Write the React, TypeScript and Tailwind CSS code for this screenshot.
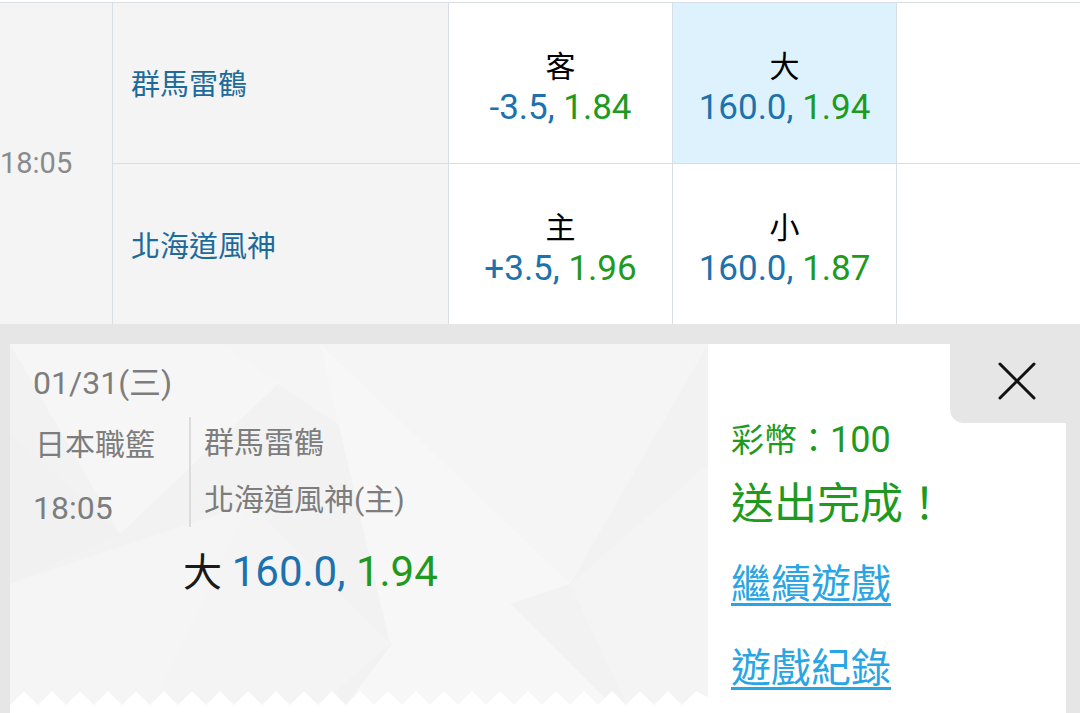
const rows = [
  { team: "群馬雷鶴", label: "客", line: "-3.5", odds: "1.84", ouLabel: "大", ouLine: "160.0", ouOdds: "1.94", picked: true },
  { team: "北海道風神", label: "主", line: "+3.5", odds: "1.96", ouLabel: "小", ouLine: "160.0", ouOdds: "1.87", picked: false },
];

function OddsCell({ label, line, odds, picked }: { label: string; line: string; odds: string; picked?: boolean }) {
  return (
    <div className={`w-[224px] border-r border-[#d7dfe5] flex flex-col items-center pt-[44px] ${picked ? "bg-[#ddf2fc]" : "bg-white"}`}>
      <div className="text-[30px] leading-[40px] text-black">{label}</div>
      <div className="text-[35px] leading-[42px]">
        <span className="text-[#1c72ad]">{line}, </span>
        <span className="text-[#1e9a1e]">{odds}</span>
      </div>
    </div>
  );
}

function PanelPattern() {
  // faint low-poly background
  return (
    <svg className="absolute inset-0 w-full h-full" viewBox="0 0 698 369" preserveAspectRatio="none">
      <rect width="698" height="369" fill="#f2f2f2" />
      <polygon points="0,0 310,0 110,190" fill="#f6f6f6" />
      <polygon points="210,0 698,0 560,240" fill="#f5f5f5" />
      <polygon points="310,0 560,240 380,300" fill="#f7f7f7" />
      <polygon points="0,240 240,160 140,369 0,369" fill="#f5f5f5" />
      <polygon points="240,160 380,300 300,369 140,369" fill="#f4f4f4" />
      <polygon points="330,369 450,210 610,369" fill="#f7f7f7" />
      <polygon points="560,240 698,120 698,369 620,369" fill="#f4f4f4" />
      <polygon points="0,90 110,190 0,240" fill="#f1f1f1" />
    </svg>
  );
}

function Zigzag() {
  const pts: string[] = ["0,22"];
  for (let x = 0; x <= 698; x += 28) {
    pts.push(`${x},14`, `${x + 14},0`);
  }
  pts.push("712,14", "712,22");
  return (
    <svg className="absolute left-0 bottom-0 w-[698px] h-[22px]" viewBox="0 0 698 22">
      <polygon points={pts.join(" ")} fill="#ffffff" />
    </svg>
  );
}

export default function App() {
  return (
    <div className="w-[1080px] h-[713px] overflow-hidden bg-white font-['Roboto','Noto_Sans_CJK_TC',sans-serif]">
      {/* game table */}
      <div className="h-[324px] pt-[2px]">
        <div className="flex h-[322px] border-t border-[#d7dfe5]">
          <div className="w-[113px] bg-[#f4f4f4] border-r border-[#d7dfe5] flex items-center">
            <span className="text-[29px] text-[#8a8a8a]">18:05</span>
          </div>
          <div className="flex-1 flex flex-col">
            {rows.map((r, i) => (
              <div key={r.team} className={`flex ${i === 0 ? "h-[161px] border-b border-[#d7dfe5]" : "h-[160px]"}`}>
                <div className={`w-[336px] bg-[#f4f4f4] border-r border-[#d7dfe5] flex items-center pl-[18px] ${i === 0 ? "pt-[6px]" : "pt-[7px]"}`}>
                  <span className="text-[29px] text-[#1d6b9b]">{r.team}</span>
                </div>
                <OddsCell label={r.label} line={r.line} odds={r.odds} />
                <OddsCell label={r.ouLabel} line={r.ouLine} odds={r.ouOdds} picked={r.picked} />
                <div className="flex-1 bg-white" />
              </div>
            ))}
          </div>
        </div>
      </div>

      {/* bet slip */}
      <div className="relative h-[389px] bg-[#e6e6e6] pt-[20px] pl-[10px] pr-[14px] flex">
        <div className="relative w-[698px] h-[369px] overflow-hidden">
          <PanelPattern />
          <Zigzag />
          <div className="relative pt-[19px] pl-[23px] text-[30px] text-[#7d7d7d]">
            <div className="leading-[40px] text-[32px]">01/31(三)</div>
            <div className="flex items-start mt-[14px]">
              <div className="w-[156px]">
                <div className="leading-[56px] pl-[2px]">日本職籃</div>
                <div className="leading-[56px] mt-[7px] text-[32px]">18:05</div>
              </div>
              <div className="w-[2px] h-[110px] bg-[#dcdcdc]" />
              <div className="pl-[13px]">
                <div className="leading-[52px]">群馬雷鶴</div>
                <div className="leading-[52px] mt-[5px]">北海道風神(主)</div>
              </div>
            </div>
            <div className="ml-[150px] mt-[12px] text-[42px] leading-[48px]">
              <span className="text-[#1a1a1a] text-[39px]">大 </span>
              <span className="text-[#1c72ad]">160.0, </span>
              <span className="text-[#1e9a1e]">1.94</span>
            </div>
          </div>
        </div>

        <div className="flex-1 h-[369px] bg-white pl-[23px] pt-[72px]">
          <div className="text-[33px] leading-[48px] text-[#1e9a1e]">
            彩幣：<span className="text-[36px]">100</span>
          </div>
          <div className="text-[43px] leading-[62px] mt-[8px] text-[#1e9a1e]">送出完成！</div>
          <div className="text-[40px] leading-[62px] mt-[19px]">
            <a className="text-[#2aa5e3] underline decoration-[3px] underline-offset-[5px]">繼續遊戲</a>
          </div>
          <div className="text-[40px] leading-[62px] mt-[22px]">
            <a className="text-[#2aa5e3] underline decoration-[3px] underline-offset-[5px]">遊戲紀錄</a>
          </div>
        </div>

        <div className="absolute top-0 right-0 w-[130px] h-[99px] bg-[#e6e6e6] rounded-bl-[14px] flex justify-center pt-[38px] pl-[4px]">
          <svg width="38" height="38" viewBox="0 0 38 38">
            <path d="M2 2 L36 36 M36 2 L2 36" stroke="#111" strokeWidth="3" strokeLinecap="round" />
          </svg>
        </div>
      </div>
    </div>
  );
}
